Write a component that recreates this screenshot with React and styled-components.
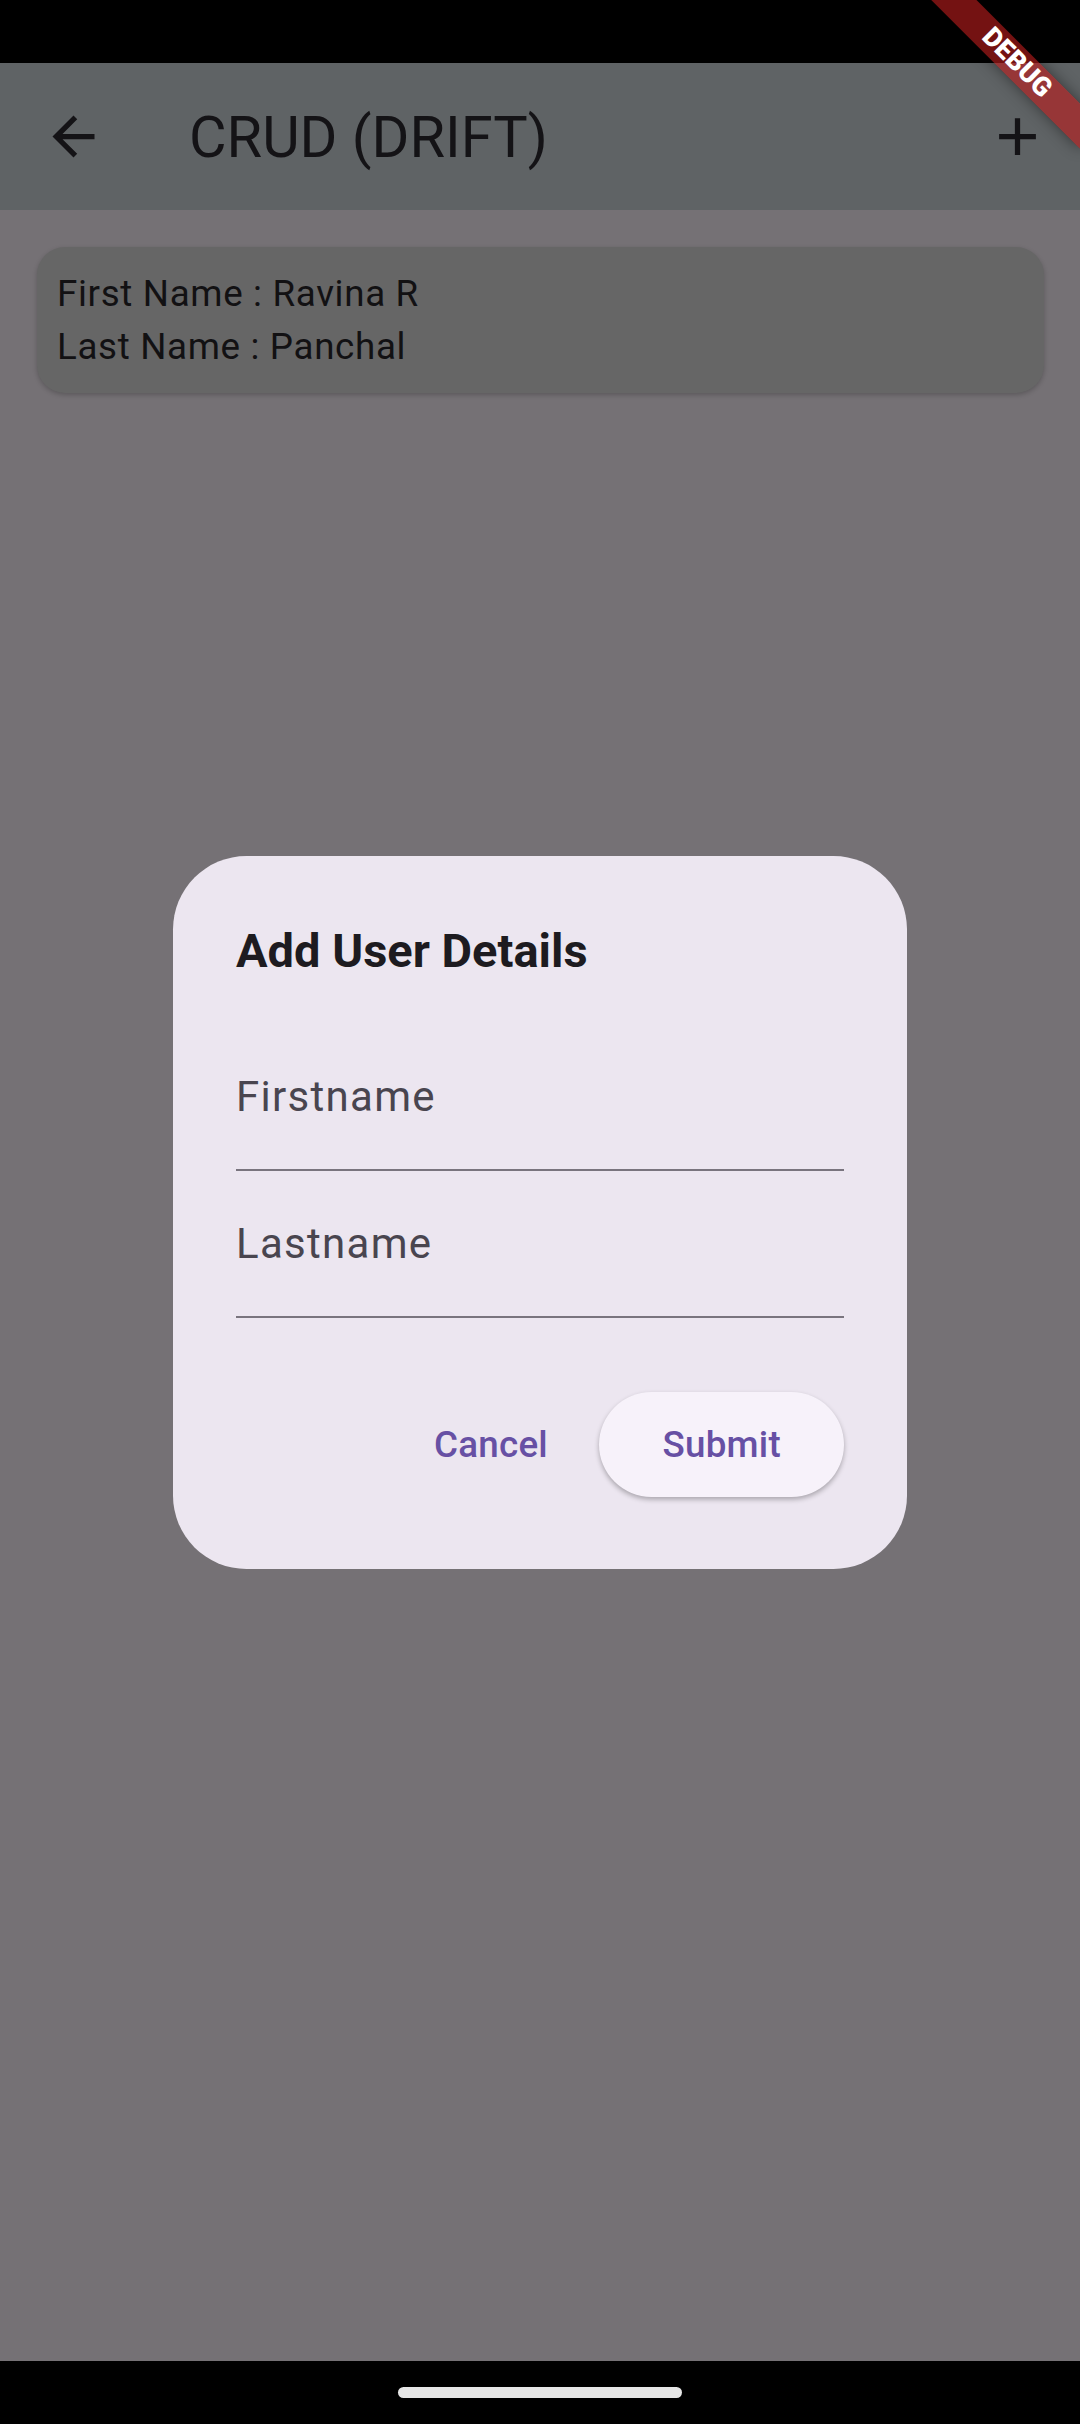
import React from 'react'
import styled, { createGlobalStyle } from 'styled-components'

const GlobalStyle = createGlobalStyle`
    html, body {
        margin: 0;
        padding: 0;
        background: #000;
    }
    body {
        font-family: Roboto, "Noto Sans", "Liberation Sans", sans-serif;
    }
`

const Screen = styled.div`
    position: relative;
    width: 1080px;
    height: 2424px;
    overflow: hidden;
    display: flex;
    flex-direction: column;
    background: #757175;
`
const StatusBar = styled.div`
    height: 63px;
    flex-shrink: 0;
    background: #000;
`
const AppBar = styled.header`
    height: 147px;
    flex-shrink: 0;
    display: flex;
    align-items: center;
    background: #5f6365;
`
const IconSlot = styled.div`
    width: ${p => p.$width || 147}px;
    height: 147px;
    display: flex;
    align-items: center;
    justify-content: center;
    color: #141316;
`
const Title = styled.h1`
    flex: 1;
    margin: 0 0 0 42px;
    font-size: 57.75px;
    font-weight: 400;
    color: #141316;
    line-height: normal;
`
const Main = styled.main`
    flex: 1;
    padding: 37px 36px 0 37px;
`
const Card = styled.div`
    padding: 20px 20px;
    border-radius: 28px;
    background: #666666;
    box-shadow: 0 2px 5px rgba(0, 0, 0, 0.22);
`
const CardLine = styled.div`
    font-size: 36.75px;
    line-height: 53px;
    letter-spacing: 0.66px;
    color: #121113;
`
const NavBar = styled.div`
    height: 63px;
    flex-shrink: 0;
    background: #000;
    display: flex;
    justify-content: center;
    padding-top: 26px;
    box-sizing: border-box;
`
const Handle = styled.div`
    width: 284px;
    height: 11px;
    border-radius: 6px;
    background: #e6e6e6;
`
const Overlay = styled.div`
    position: absolute;
    top: 63px;
    bottom: 63px;
    left: 0;
    right: 0;
    display: flex;
    align-items: center;
    justify-content: center;
`
const Dialog = styled.div`
    width: 734px;
    box-sizing: border-box;
    padding: 63px 63px 72px;
    border-radius: 73.5px;
    background: #ece6f0;
`
const DialogTitle = styled.h2`
    margin: 0 0 42px;
    font-size: 47px;
    font-weight: 700;
    line-height: 63px;
    color: #1d1b20;
`
const Field = styled.div`
    height: 147px;
    box-sizing: border-box;
    padding-top: 48px;
    border-bottom: 2.6px solid #79747e;
`
const FieldLabel = styled.label`
    display: block;
    font-size: 42px;
    letter-spacing: 1.3px;
    line-height: normal;
    color: #49454f;
`
const Actions = styled.div`
    margin-top: 74px;
    display: flex;
    justify-content: flex-end;
    gap: 20px;
`
const ActionButton = styled.button`
    height: 105px;
    padding: 0 ${p => (p.$elevated ? 63 : 31.5)}px;
    border: none;
    border-radius: 53px;
    background: ${p => (p.$elevated ? '#f7f2fa' : 'transparent')};
    box-shadow: ${p => (p.$elevated ? '0 2.6px 5px rgba(0, 0, 0, 0.28)' : 'none')};
    font-family: Roboto, "Liberation Sans", sans-serif;
    font-size: 36.75px;
    font-weight: 500;
    letter-spacing: 0.26px;
    color: #6750a4;
`
const DebugBanner = styled.div`
    position: absolute;
    left: 912px;
    top: 47.25px;
    width: 210px;
    height: 31.5px;
    transform: rotate(45deg);
    background: rgba(183, 28, 28, 0.63);
    box-shadow: 0 0 15px rgba(0, 0, 0, 0.45);
    display: flex;
    align-items: center;
    justify-content: center;
    color: #fff;
    font-size: 26.8px;
    font-weight: 900;
    line-height: 1;
`

const BackIcon = () => (
    <svg width="63" height="63" viewBox="0 0 24 24" fill="currentColor">
        <path d="M20 11H7.83l5.59-5.59L12 4l-8 8 8 8 1.41-1.41L7.83 13H20v-2z" />
    </svg>
)

const AddIcon = () => (
    <svg width="63" height="63" viewBox="0 0 24 24" fill="currentColor">
        <path d="M19 13h-6v6h-2v-6H5v-2h6V5h2v6h6v2z" />
    </svg>
)

const App = () => {
    return (
        <>
            <GlobalStyle />
            <Screen>
                <StatusBar />
                <AppBar>
                    <IconSlot><BackIcon /></IconSlot>
                    <Title>CRUD (DRIFT)</Title>
                    <IconSlot $width={126}><AddIcon /></IconSlot>
                </AppBar>
                <Main>
                    <Card>
                        <CardLine>First Name : Ravina R</CardLine>
                        <CardLine>Last Name : Panchal</CardLine>
                    </Card>
                </Main>
                <NavBar><Handle /></NavBar>

                <Overlay>
                    <Dialog>
                        <DialogTitle>Add User Details</DialogTitle>
                        <Field><FieldLabel>Firstname</FieldLabel></Field>
                        <Field><FieldLabel>Lastname</FieldLabel></Field>
                        <Actions>
                            <ActionButton>Cancel</ActionButton>
                            <ActionButton $elevated>Submit</ActionButton>
                        </Actions>
                    </Dialog>
                </Overlay>

                <DebugBanner>DEBUG</DebugBanner>
            </Screen>
        </>
    )
}

export default App
